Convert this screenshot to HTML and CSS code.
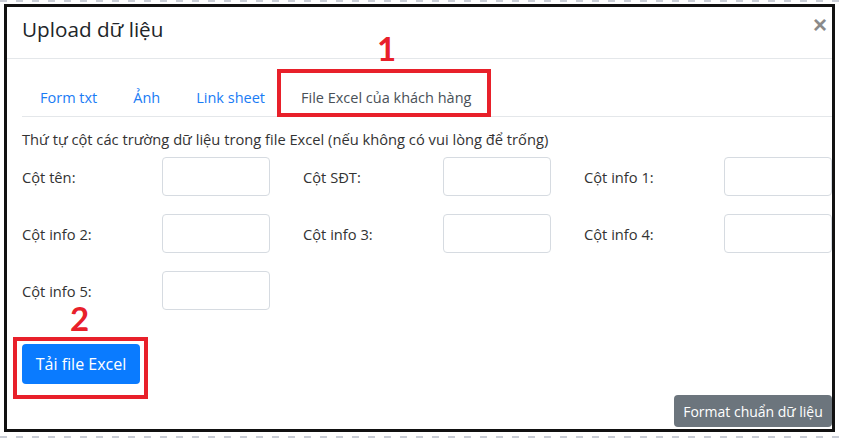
FILE: index.html
```html
<!DOCTYPE html>
<html lang="vi">
<head>
<meta charset="utf-8">
<title>Upload dữ liệu</title>
<link rel="stylesheet" href="styles.css">
</head>
<body>
<div class="dash dash-top"></div>
<div class="frame">
  <div class="modal-header">
    <h5 class="modal-title">Upload dữ liệu</h5>
    <span class="close">&times;</span>
  </div>
  <div class="modal-body">
    <ul class="tabs">
      <li><a class="tab-link">Form txt</a></li>
      <li><a class="tab-link">Ảnh</a></li>
      <li><a class="tab-link">Link sheet</a></li>
      <li><a class="tab-link active">File Excel của khách hàng</a></li>
    </ul>
    <p class="desc">Thứ tự cột các trường dữ liệu trong file Excel (nếu không có vui lòng để trống)</p>
    <div class="fields">
      <div class="field"><label>Cột tên:</label><input type="text"></div>
      <div class="field"><label>Cột SĐT:</label><input type="text"></div>
      <div class="field"><label>Cột info 1:</label><input type="text"></div>
      <div class="field"><label>Cột info 2:</label><input type="text"></div>
      <div class="field"><label>Cột info 3:</label><input type="text"></div>
      <div class="field"><label>Cột info 4:</label><input type="text"></div>
      <div class="field"><label>Cột info 5:</label><input type="text"></div>
    </div>
    <button class="btn btn-primary">Tải file Excel</button>
  </div>
  <div class="modal-footer">
    <button class="btn btn-secondary">Format chuẩn dữ liệu</button>
  </div>
  <div class="mark mark-box mark-box-1"></div>
  <div class="mark mark-num mark-num-1">1</div>
  <div class="mark mark-box mark-box-2"></div>
  <div class="mark mark-num mark-num-2">2</div>
</div>
<div class="dash dash-bottom"></div>
</body>
</html>
```
FILE: styles.css
```css
* { box-sizing: border-box; }
html, body { margin: 0; padding: 0; background: #fff; }
body {
  font-family: "Open Sans", "Noto Sans", sans-serif;
  color: #333;
  width: 841px;
  height: 439px;
  overflow: hidden;
}
.dash {
  height: 4px;
  background: repeating-linear-gradient(90deg, #c9cdd6 0 7px, transparent 7px 16px);
  background-size: 100% 2px;
  background-repeat: no-repeat;
}
.dash-bottom { margin-top: 4px; }
.frame {
  position: relative;
  margin-left: 4px;
  width: 831px;
  height: 428px;
  border: 3px solid #111;
  display: flex;
  flex-direction: column;
  overflow: hidden;
}
.modal-header {
  height: 52px;
  border-bottom: 1px solid #e4e7ea;
  display: flex;
  align-items: center;
  justify-content: space-between;
  padding: 0 4px 0 15px;
}
.modal-title {
  margin: 0;
  font-size: 20.7px;
  font-weight: 400;
  color: #212529;
  line-height: 1.2;
  margin-top: -7px;
}
.close {
  font-family: "Liberation Sans", Arial, sans-serif;
  font-size: 24px;
  font-weight: 700;
  color: #8a8a8a;
  line-height: 1;
  margin-top: -16px;
  margin-right: 1px;
}
.modal-body {
  padding: 17px 0 0 15px;
}
.tabs {
  list-style: none;
  margin: 0;
  padding: 0;
  display: flex;
  border-bottom: 1px solid #e4e7ea;
}
.tab-link {
  display: block;
  padding: 0 18px;
  height: 40px;
  line-height: 44px;
  font-size: 14.5px;
  color: #1a7cf5;
}
.tab-link.active { color: #495057; }
.desc {
  margin: 12px 0 0;
  font-size: 14.7px;
  line-height: 20px;
}
.fields {
  display: grid;
  grid-template-columns: repeat(3, 281px);
  row-gap: 18px;
  margin-top: 8px;
}
.field {
  display: flex;
  align-items: center;
  height: 39px;
}
.field label {
  width: 140px;
  font-size: 14.7px;
}
.field input {
  width: 108px;
  height: 39px;
  border: 1px solid #d6dbe1;
  border-radius: 4px;
  background: #fff;
  margin: 0;
}
.btn {
  font-family: inherit;
  border: none;
  border-radius: 4px;
  color: #fff;
  cursor: pointer;
}
.btn-primary {
  margin-top: 34px;
  width: 118px;
  height: 40px;
  background: #0a7bff;
  font-size: 16px;
}
.modal-footer {
  margin-top: auto;
  display: flex;
  justify-content: flex-end;
  padding-bottom: 2px;
}
.btn-secondary {
  width: 158px;
  height: 32px;
  background: #6c757d;
  font-size: 14px;
}
.mark { position: absolute; }
.mark-box { border: 4px solid #e8202a; }
.mark-box-1 { left: 270px; top: 62px; width: 214px; height: 48px; }
.mark-box-2 { left: 6px; top: 330px; width: 135px; height: 62px; }
.mark-num {
  font-family: "Lato", sans-serif;
  color: #e8202a;
  font-weight: 700;
  font-size: 33px;
  line-height: 1;
}
.mark-num-1 { left: 370px; top: 25px; }
.mark-num-2 { left: 63px; top: 295px; }
```
